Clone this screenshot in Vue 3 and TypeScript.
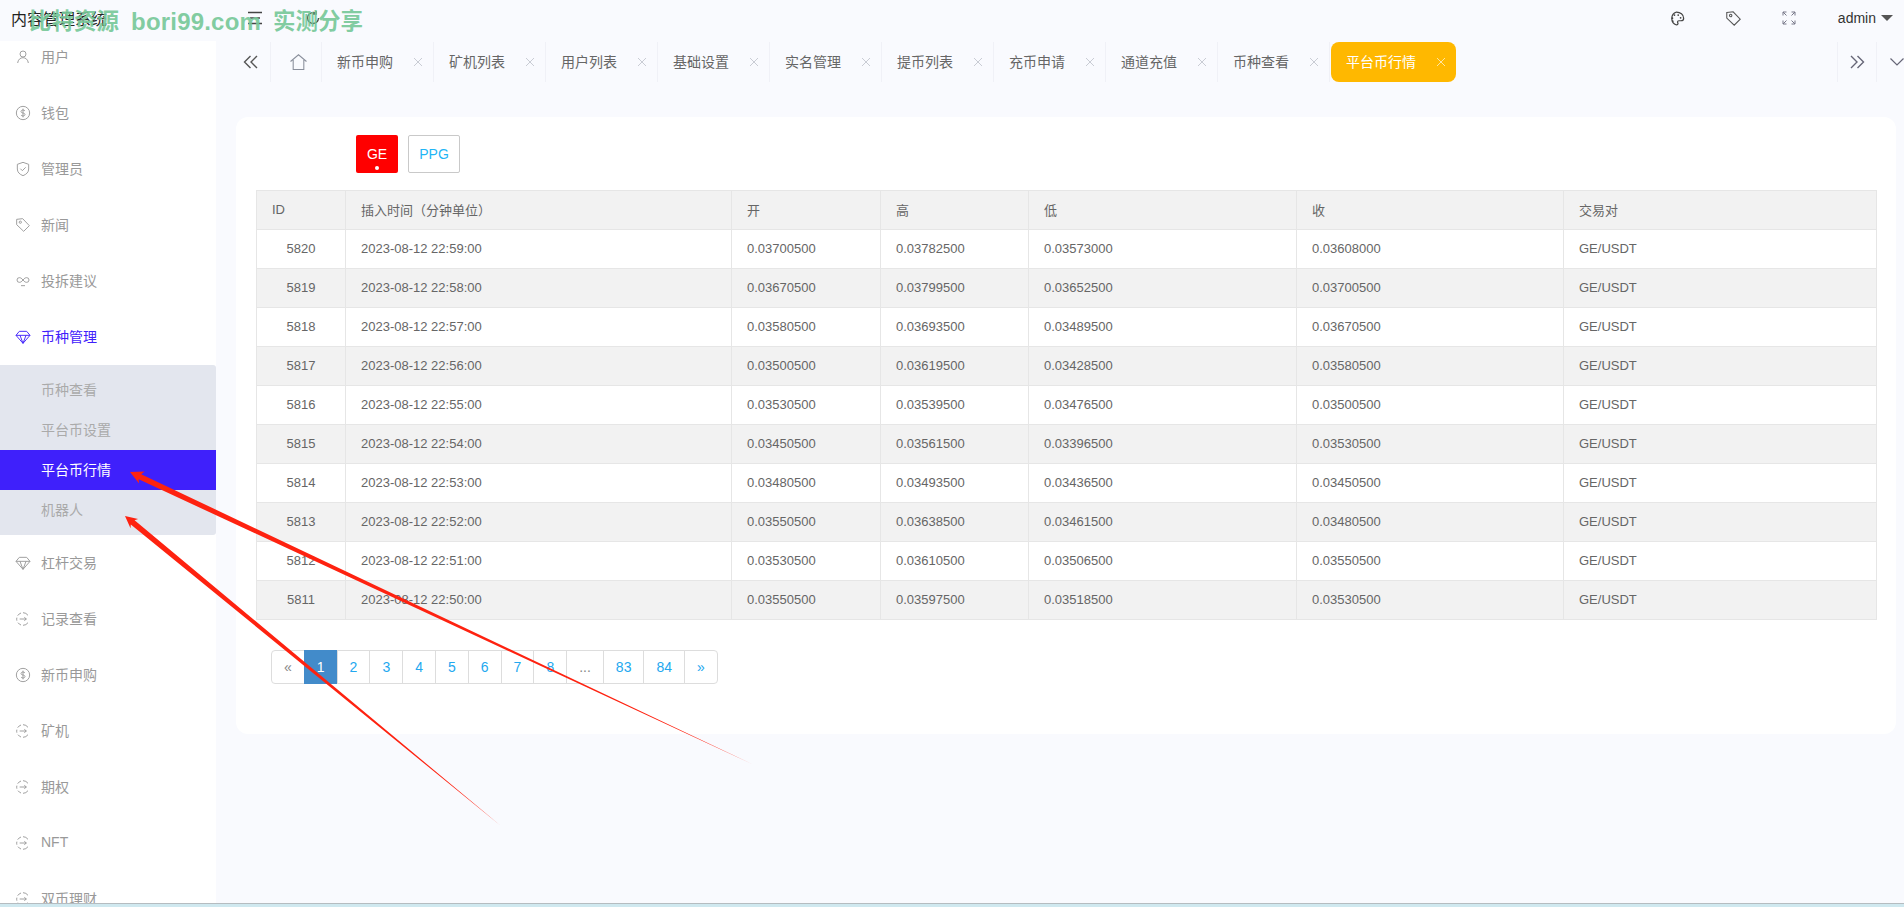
<script setup lang="ts">
type IconName = 'user' | 'dollar' | 'shield' | 'tag' | 'loop' | 'gem' | 'record'

interface MenuItem {
  label: string
  icon: IconName
  active?: boolean
  children?: { label: string; active?: boolean }[]
}

const icons: Record<IconName, string> = {
  user: 'M12 12a4.500 4.500 0 1 0 0-9 4.500 4.500 0 0 0 0 9z M4 21c.5-5 4-8 8-8s7.500 3 8 8',
  dollar:
    'M12 22a10 10 0 1 0 0-20 10 10 0 0 0 0 20z M15 9c-.6-1-1.700-1.500-3-1.500-1.800 0-3 1-3 2.300s1.200 1.900 3 2.200 3 1 3 2.300-1.200 2.200-3 2.200c-1.300 0-2.400-.5-3-1.500 M12 5.500v13',
  shield: 'M12 2l8.500 3v7c0 5-3.500 8-8.500 10-5-2-8.500-5-8.500-10V5z M8 11.500l3 3 5-5',
  tag: 'M2.500 3.500l9-1 10 10.500-8.500 8.500-10.500-10z M8 9.500a1.700 1.700 0 1 0 0-3.400 1.700 1.700 0 0 0 0 3.400z',
  loop: 'M12 10.500c-2-2.500-3.500-3.500-5.500-3.500a3.500 3.500 0 0 0 0 7c2 0 3.500-1 5.500-3.500s3.500-3.500 5.500-3.500a3.500 3.500 0 0 1 0 7c-2 0-3.500-1-5.500-3.500z M9 19h6',
  gem: 'M6.500 3.500h11l5 6-10.500 12L1.500 9.500z M1.500 9.500h21 M7.500 9.500l4.500 12 4.500-12',
  record:
    'M19.500 6.500A9.500 9.500 0 0 0 12 2.500 M9 3a9.500 9.500 0 0 0-5 4 M2.800 10a9.500 9.500 0 0 0 0 4.500 M4.500 17.500a9.500 9.500 0 0 0 4.500 3.500 M12 21.500a9.500 9.500 0 0 0 7.500-4 M7 12h10 M14 9.500l3 2.500-3 2.500',
}

const menu: MenuItem[] = [
  { label: '用户', icon: 'user' },
  { label: '钱包', icon: 'dollar' },
  { label: '管理员', icon: 'shield' },
  { label: '新闻', icon: 'tag' },
  { label: '投拆建议', icon: 'loop' },
  {
    label: '币种管理',
    icon: 'gem',
    active: true,
    children: [
      { label: '币种查看' },
      { label: '平台币设置' },
      { label: '平台币行情', active: true },
      { label: '机器人' },
    ],
  },
  { label: '杠杆交易', icon: 'gem' },
  { label: '记录查看', icon: 'record' },
  { label: '新币申购', icon: 'dollar' },
  { label: '矿机', icon: 'record' },
  { label: '期权', icon: 'record' },
  { label: 'NFT', icon: 'record' },
  { label: '双币理财', icon: 'record' },
]

const tabs = ['新币申购', '矿机列表', '用户列表', '基础设置', '实名管理', '提币列表', '充币申请', '通道充值', '币种查看']

const rows = [
  ['5820', '2023-08-12 22:59:00', '0.03700500', '0.03782500', '0.03573000', '0.03608000'],
  ['5819', '2023-08-12 22:58:00', '0.03670500', '0.03799500', '0.03652500', '0.03700500'],
  ['5818', '2023-08-12 22:57:00', '0.03580500', '0.03693500', '0.03489500', '0.03670500'],
  ['5817', '2023-08-12 22:56:00', '0.03500500', '0.03619500', '0.03428500', '0.03580500'],
  ['5816', '2023-08-12 22:55:00', '0.03530500', '0.03539500', '0.03476500', '0.03500500'],
  ['5815', '2023-08-12 22:54:00', '0.03450500', '0.03561500', '0.03396500', '0.03530500'],
  ['5814', '2023-08-12 22:53:00', '0.03480500', '0.03493500', '0.03436500', '0.03450500'],
  ['5813', '2023-08-12 22:52:00', '0.03550500', '0.03638500', '0.03461500', '0.03480500'],
  ['5812', '2023-08-12 22:51:00', '0.03530500', '0.03610500', '0.03506500', '0.03550500'],
  ['5811', '2023-08-12 22:50:00', '0.03550500', '0.03597500', '0.03518500', '0.03530500'],
]

const pages = ['2', '3', '4', '5', '6', '7', '8']
</script>

<template>
  <div class="app">
    <header class="topbar">
      <div class="brand">内容管理系统</div>
      <div class="top-tools">
        <svg class="tool-menu" width="16" height="16" viewBox="0 0 16 16" fill="none" stroke="#444" stroke-width="1.300">
          <path d="M1 2.500h14 M3 8h10 M1 13.500h14" />
        </svg>
        <svg class="tool-refresh" width="16" height="16" viewBox="0 0 16 16" fill="none" stroke="#444" stroke-width="1.300">
          <path d="M13.500 8A5.500 5.500 0 1 1 11 3.400 M11 1v3h-3" />
        </svg>
      </div>
      <div class="top-right">
        <svg width="17" height="15" viewBox="0 0 24 22" fill="none" stroke="#444" stroke-width="1.800">
          <path d="M12 1.500a10 10 0 0 0 0 19c1.500 0 2.200-1 2.200-2s-.7-1.500-.7-2.500 1-1.700 2-1.700h3c2.300 0 4-1.500 4-3.800C22.500 5 17.500 1.500 12 1.500z" />
          <path class="dots" d="M6 10.500h.01 M9 6h.01 M14.500 6h.01 M18 10h.01 M6.500 15h.01" />
        </svg>
        <svg width="17" height="17" viewBox="0 0 24 24" fill="none" stroke="#555" stroke-width="1.500">
          <path :d="icons.tag" />
        </svg>
        <svg width="14" height="14" viewBox="0 0 14 14" fill="none" stroke="#778" stroke-width="1">
          <path d="M1 4.500V1h3.500 M1 1l3.500 3.500 M13 4.500V1H9.500 M13 1L9.500 4.500 M1 9.500V13h3.500 M1 13l3.500-3.500 M13 9.500V13H9.500 M13 13L9.500 9.500" />
        </svg>
        <div class="user">
          admin
          <span class="caret"></span>
        </div>
      </div>
    </header>

    <div class="body">
      <aside class="sidebar">
        <div class="menu">
          <template v-for="item in menu" :key="item.label">
            <div class="menu-item" :class="{ active: item.active }">
              <svg class="menu-icon" width="16" height="16" viewBox="0 0 24 24" fill="none" stroke="currentColor" stroke-width="1.400">
                <path :d="icons[item.icon]" />
              </svg>
              <span class="menu-label">{{ item.label }}</span>
            </div>
            <div v-if="item.children" class="submenu">
              <div
                v-for="sub in item.children"
                :key="sub.label"
                class="submenu-item"
                :class="{ active: sub.active }"
              >
                {{ sub.label }}
              </div>
            </div>
          </template>
        </div>
      </aside>

      <main class="main">
        <nav class="tabs">
          <div class="tab-btn tab-prev">
            <svg width="15" height="14" viewBox="0 0 15 14" fill="none" stroke="#555" stroke-width="1.400">
              <path d="M7.500 1l-6 6 6 6 M14 1L8 7l6 6" />
            </svg>
          </div>
          <div class="tab-btn tab-home">
            <svg width="17" height="16" viewBox="0 0 16 15" fill="none" stroke="#8a8f9c" stroke-width="1">
              <path d="M0.500 7L8 0.700 15.500 7 M3 5.500v9h10v-9" />
            </svg>
          </div>
          <div v-for="tab in tabs" :key="tab" class="tab">
            <span class="tab-label">{{ tab }}</span>
            <svg class="tab-close" width="10" height="10" viewBox="0 0 10 10" stroke="#c9ccd4" stroke-width="1">
              <path d="M1 1l8 8 M9 1L1 9" />
            </svg>
          </div>
          <div class="tab tab-current">
            <span class="tab-label">平台币行情</span>
            <svg class="tab-close" width="10" height="10" viewBox="0 0 10 10" stroke="#ffe6a0" stroke-width="1">
              <path d="M1 1l8 8 M9 1L1 9" />
            </svg>
          </div>
          <div class="tabs-end">
            <div class="tab-btn tab-next">
              <svg width="15" height="14" viewBox="0 0 15 14" fill="none" stroke="#667" stroke-width="1.400">
                <path d="M1 1l6 6-6 6 M7.500 1l6 6-6 6" />
              </svg>
            </div>
            <div class="tab-more">
              <svg width="14" height="8" viewBox="0 0 14 8" fill="none" stroke="#667" stroke-width="1.200">
                <path d="M.5 .5L7 7l6.500-6.500" />
              </svg>
            </div>
          </div>
        </nav>

        <section class="card">
          <div class="coins">
            <button class="coin coin-on">GE<i class="coin-dot"></i></button>
            <button class="coin">PPG</button>
          </div>

          <table class="grid">
            <colgroup>
              <col style="width: 89px" />
              <col style="width: 386px" />
              <col style="width: 149px" />
              <col style="width: 148px" />
              <col style="width: 268px" />
              <col style="width: 267px" />
              <col style="width: 313px" />
            </colgroup>
            <thead>
              <tr>
                <th>ID</th>
                <th>插入时间（分钟单位）</th>
                <th>开</th>
                <th>高</th>
                <th>低</th>
                <th>收</th>
                <th>交易对</th>
              </tr>
            </thead>
            <tbody>
              <tr v-for="row in rows" :key="row[0]">
                <td class="id">{{ row[0] }}</td>
                <td v-for="(cell, i) in row.slice(1)" :key="i">{{ cell }}</td>
                <td>GE/USDT</td>
              </tr>
            </tbody>
          </table>

          <ul class="pagination">
            <li class="muted">«</li>
            <li class="current">1</li>
            <li v-for="p in pages" :key="p">{{ p }}</li>
            <li class="muted">...</li>
            <li>83</li>
            <li>84</li>
            <li>»</li>
          </ul>
        </section>
      </main>
    </div>

    <div class="statusbar"></div>

    <!-- 水印 -->
    <div class="watermark">
      <span>比特资源</span>
      <span class="watermark-url">bori99.com</span>
      <span>实测分享</span>
    </div>

    <!-- 红色箭头标注 -->
    <svg class="arrows" width="1904" height="907" viewBox="0 0 1904 907">
      <polygon points="130,472 144.600,471.600 141.200,474.200 752,764 138.700,479.300 139,483.400" />
      <polygon points="125,516 138.100,519 134.600,520.200 501,826 130.800,524.600 130.500,528.200" />
    </svg>
  </div>
</template>

<style>
html,
body {
  margin: 0;
  background: #f9fafe;
}
</style>

<style scoped>
.app {
  position: relative;
  display: flex;
  flex-direction: column;
  height: 907px;
  overflow: hidden;
  background: #f9fafe;
  font-family: 'Liberation Sans', 'Noto Sans CJK SC', sans-serif;
  color: #666;
}

/* 顶栏 */
.topbar {
  display: flex;
  align-items: center;
  flex-shrink: 0;
  height: 41px;
  padding-bottom: 5px;
  box-sizing: border-box;
}

.brand {
  width: 247px;
  padding-left: 11px;
  box-sizing: border-box;
  font-size: 16px;
  color: #222;
}

.top-tools {
  display: flex;
  gap: 42px;
}

.top-right {
  display: flex;
  align-items: center;
  margin-left: auto;
  gap: 40px;
  padding-right: 11px;
}

.dots {
  stroke-width: 2.600;
  stroke-linecap: round;
}

.user {
  display: flex;
  align-items: center;
  gap: 5px;
  margin-left: 2px;
  font-size: 14px;
  color: #333;
}

.caret {
  width: 0;
  height: 0;
  border-left: 6px solid transparent;
  border-right: 6px solid transparent;
  border-top: 6px solid #555;
}

.body {
  display: flex;
  flex: 1;
  min-height: 0;
}

/* 侧边栏 */
.sidebar {
  flex-shrink: 0;
  width: 216px;
  overflow: hidden;
  background: #fff;
}

.menu {
  margin-top: -12px;
}

.menu-item {
  display: flex;
  align-items: center;
  gap: 10px;
  height: 56px;
  padding-left: 15px;
  font-size: 14px;
  color: #999;
}

.menu-item.active {
  color: #3f20fb;
}

.menu-icon {
  flex-shrink: 0;
}

.menu-label {
  margin-bottom: 2px;
}

.submenu {
  padding: 5px 0;
  border-radius: 0 3px 3px 0;
  background: #e3e6ee;
}

.submenu-item {
  height: 40px;
  padding-left: 41px;
  font-size: 14px;
  line-height: 40px;
  color: #aaa;
}

.submenu-item.active {
  background: #3f20fb;
  color: #fff;
}

/* 标签栏 */
.main {
  flex: 1;
  min-width: 0;
}

.tabs {
  display: flex;
  align-items: stretch;
  height: 41px;
  padding-top: 1px;
  box-sizing: border-box;
  font-size: 14px;
}

.tab-btn {
  display: flex;
  align-items: center;
  justify-content: center;
  box-sizing: border-box;
  border-right: 1px solid #f0f1f7;
}

.tab-prev {
  width: 55px;
  padding-left: 14px;
}

.tab-home {
  width: 51px;
  padding-left: 5px;
}

.tab {
  display: flex;
  align-items: center;
  box-sizing: border-box;
  width: 112px;
  padding-left: 15px;
  border-right: 1px solid #f0f1f7;
  color: #666;
}

.tab-label {
  margin-bottom: 2px;
}

.tab-close {
  margin-left: 20px;
}

.tab-current {
  width: 125px;
  margin-left: 1px;
  padding-left: 15px;
  border: none;
  border-radius: 8px;
  background: #ffb800;
  color: #fff;
}

.tabs-end {
  display: flex;
  margin-left: auto;
}

.tab-next {
  width: 40px;
  border-left: 1px solid #f0f1f7;
}

.tab-more {
  display: flex;
  align-items: center;
  justify-content: flex-end;
  width: 27px;
  box-sizing: border-box;
}

/* 内容卡片 */
.card {
  margin: 35px 8px 0 20px;
  padding: 18px 20px 50px;
  border-radius: 12px;
  background: #fff;
}

.coins {
  display: flex;
  gap: 10px;
  margin-left: 100px;
  margin-bottom: 17px;
}

.coin {
  position: relative;
  height: 38px;
  padding: 0;
  width: 52px;
  border: 1px solid #c9c9c9;
  border-radius: 2px;
  background: #fff;
  font-family: inherit;
  font-size: 14px;
  color: #1fb5f5;
}

.coin-on {
  width: 42px;
  border: none;
  background: #f00;
  color: #fff;
}

.coin-dot {
  position: absolute;
  left: 19px;
  bottom: 3px;
  width: 4px;
  height: 4px;
  border-radius: 50%;
  background: #fff;
}

.grid {
  width: 1620px;
  table-layout: fixed;
  border-collapse: collapse;
  font-size: 13px;
  color: #666;
}

.grid th,
.grid td {
  height: 39px;
  box-sizing: border-box;
  padding: 0 15px 1px;
  border: 1px solid #e6e6e6;
  font-weight: 400;
  text-align: left;
}

.grid th {
  background: #f2f2f2;
}

.grid tbody tr:nth-child(even) {
  background: #f2f2f2;
}

.grid td.id {
  text-align: center;
}

.pagination {
  display: flex;
  width: max-content;
  margin: 30px 0 0 15px;
  padding: 0;
  list-style: none;
  font-size: 14px;
  line-height: 20px;
  color: #23a8ef;
}

.pagination li {
  margin-left: -1px;
  padding: 6px 12px;
  border: 1px solid #ddd;
  background: #fff;
}

.pagination li:first-child {
  margin-left: 0;
  border-radius: 4px 0 0 4px;
}

.pagination li:last-child {
  border-radius: 0 4px 4px 0;
}

.pagination .muted {
  color: #888;
}

.pagination .current {
  border-color: #428bca;
  background: #428bca;
  color: #fff;
}

.statusbar {
  flex-shrink: 0;
  height: 3px;
  border-top: 1px solid #b5bcc0;
  background: #cfe8ef;
}

.watermark {
  position: absolute;
  left: 29px;
  top: 9px;
  display: flex;
  align-items: center;
  gap: 12px;
  font-size: 22.500px;
  font-weight: 700;
  line-height: 26px;
  white-space: nowrap;
  color: rgba(118, 200, 152, 0.92);
}

.watermark-url {
  font-size: 24px;
  letter-spacing: 0.2px;
}

.arrows {
  position: absolute;
  left: 0;
  top: 0;
  pointer-events: none;
}

.arrows polygon {
  fill: #fe2210;
}
</style>
